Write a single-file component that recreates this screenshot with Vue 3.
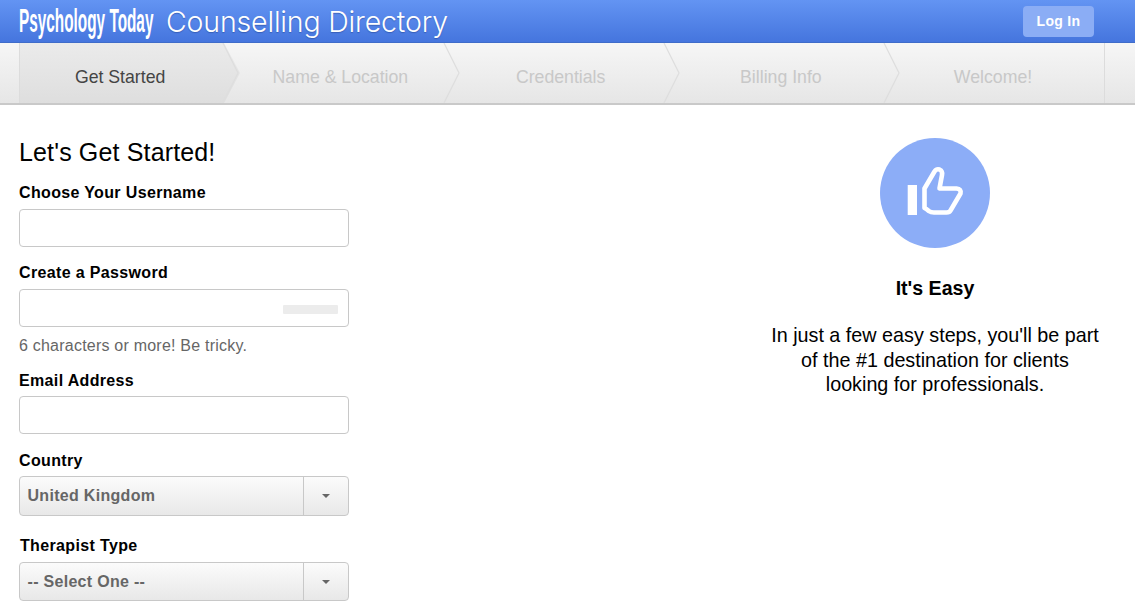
<script setup>
const steps = [
  { name: 'Get Started', active: true },
  { name: 'Name & Location' },
  { name: 'Credentials' },
  { name: 'Billing Info' },
  { name: 'Welcome!', last: true }
]
</script>

<template>
  <div class="page">
    <header class="topbar">
      <div class="brand">
        <span class="logo">Psychology Today</span>
        <span class="title">Counselling Directory</span>
      </div>
      <button class="login">Log In</button>
    </header>

    <nav class="stepsbar">
      <div class="steps">
        <div v-for="s in steps" :key="s.name" class="step" :class="{ active: s.active, last: s.last }">
          <svg v-if="s.active" class="active-bg" viewBox="0 0 221 60" preserveAspectRatio="none">
            <defs>
              <linearGradient id="activeGrad" x1="0" y1="0" x2="0" y2="1">
                <stop offset="0" stop-color="#ebebeb" />
                <stop offset="1" stop-color="#dedede" />
              </linearGradient>
            </defs>
            <polygon points="0,0 204,0 220,30 204,60 0,60" fill="url(#activeGrad)" />
          </svg>
          <span class="step-name">{{ s.name }}</span>
          <svg v-if="!s.last" class="chev" viewBox="0 0 18 60" preserveAspectRatio="none">
            <polyline points="1,0 16,30 1,60" fill="none" stroke="#dedede" stroke-width="1.2" />
          </svg>
        </div>
      </div>
    </nav>

    <main class="content">
      <form class="form" @submit.prevent>
        <h1>Let's Get Started!</h1>
        <label class="lab first">Choose Your Username</label>
        <div class="input"></div>
        <label class="lab">Create a Password</label>
        <div class="input pw"><span class="meter"></span></div>
        <p class="hint">6 characters or more! Be tricky.</p>
        <label class="lab tight">Email Address</label>
        <div class="input"></div>
        <label class="lab tight">Country</label>
        <div class="select">
          <span class="value">United Kingdom</span>
          <span class="caret-box"><i class="caret"></i></span>
        </div>
        <label class="lab type">Therapist Type</label>
        <div class="select second">
          <span class="value">-- Select One --</span>
          <span class="caret-box"><i class="caret"></i></span>
        </div>
      </form>

      <aside class="side">
        <div class="circle">
          <svg width="110" height="110" viewBox="0 0 110 110">
            <rect x="27.7" y="47" width="9.3" height="30" fill="#fff" />
            <path d="M44.5 50.5 L54.5 33.5 Q56.5 30.5 59.5 31.5 Q62.8 33 62 37 L59.5 50.5 L76.5 50.5 Q81.5 51 80.5 55.5 L70.5 72.5 Q69.5 74.5 66.5 74.5 L54 74.5 Q51 74.5 48.5 72.8 Q46.5 71 44.5 70 Z"
              fill="none" stroke="#fff" stroke-width="4.6" stroke-linejoin="round" />
          </svg>
        </div>
        <h2>It's Easy</h2>
        <p>In just a few easy steps, you'll be part<br />of the #1 destination for clients<br />looking for professionals.</p>
      </aside>
    </main>
  </div>
</template>

<style>
html, body { margin: 0; background: #fff; }
</style>

<style scoped>
.page {
  width: 1135px;
  height: 609px;
  overflow: hidden;
  font-family: "Liberation Sans", Arial, sans-serif;
  color: #000;
  background: #fff;
}
.topbar {
  height: 43px;
  box-sizing: border-box;
  display: flex;
  align-items: center;
  justify-content: space-between;
  padding: 0 41px 0 19px;
  background: linear-gradient(#6394f3, #4575de);
  border-bottom: 1px solid #3f6cc9;
}
.brand { display: flex; align-items: center; }
.logo {
  display: inline-block;
  width: 136px;
  white-space: nowrap;
  font-family: "Liberation Sans", Arial, sans-serif;
  font-weight: 700;
  font-size: 33px;
  line-height: 36px;
  color: #fff;
  transform: scaleX(0.465);
  transform-origin: left center;
}
.title {
  margin-left: 11px;
  padding-top: 2px;
  font-family: Inter, Lato, "Liberation Sans", sans-serif;
  font-weight: 300;
  font-size: 28.5px;
  line-height: 34px;
  letter-spacing: -0.17px;
  color: #fff;
  text-shadow: 0 1px 1px rgba(30, 60, 130, 0.45);
}
.login {
  width: 71px;
  height: 31px;
  margin-top: 1px;
  border: 0;
  border-radius: 4px;
  background: #8badf5;
  color: #fff;
  font: bold 14px "Liberation Sans", Arial, sans-serif;
  letter-spacing: 0.3px;
  padding: 0 0 2px;
}
.stepsbar {
  height: 62px;
  box-sizing: border-box;
  padding-left: 19px;
  background: linear-gradient(#f6f6f6, #e6e6e6);
  border-bottom: 2px solid #c9c9c9;
}
.steps {
  width: 1086px;
  height: 100%;
  display: flex;
  border-left: 1px solid #dcdcdc;
  border-right: 1px solid #dcdcdc;
  box-sizing: border-box;
}
.step {
  position: relative;
  width: 220.25px;
  flex: none;
  display: flex;
  align-items: center;
  justify-content: center;
  padding: 9px 20px 0 0;
  box-sizing: border-box;
  font-size: 17.7px;
  color: #c8c8c8;
}
.step.last { width: 200px; padding: 9px 16px 0 0; }
.step.active { color: #444; }
.step-name { position: relative; }
.active-bg {
  position: absolute;
  left: 0;
  top: 0;
  width: 221px;
  height: 100%;
}
.chev {
  position: absolute;
  right: 0;
  top: 0;
  width: 18px;
  height: 100%;
}
.content {
  display: flex;
  justify-content: space-between;
}
.form {
  width: 330px;
  margin-left: 19px;
  padding-top: 33px;
}
h1 {
  margin: 0;
  font-size: 25px;
  letter-spacing: 0.15px;
  font-weight: 400;
  line-height: 28px;
}
.lab {
  display: block;
  font-size: 16px;
  letter-spacing: 0.35px;
  font-weight: 700;
  line-height: 18px;
  margin-top: 17px;
  margin-bottom: 7px;
}
.lab.first { margin-top: 18px; }
.lab.tight { margin-top: 18px; margin-bottom: 6px; }
.lab.type { margin: 21px 0 7px 1px; }
.input {
  height: 38px;
  box-sizing: border-box;
  border: 1px solid #c8c8c8;
  border-radius: 4px;
  background: #fff;
  position: relative;
}
.meter {
  position: absolute;
  right: 10px;
  top: 15px;
  width: 55px;
  height: 9px;
  border-radius: 1px;
  background: #ececec;
}
.hint {
  margin: 10px 0 -1px;
  font-size: 16px;
  letter-spacing: 0.22px;
  line-height: 18px;
  color: #666;
}
.select {
  height: 40px;
  box-sizing: border-box;
  display: flex;
  border: 1px solid #c8c8c8;
  border-radius: 4px;
  background: linear-gradient(#fbfbfb, #e8e8e8);
}
.select.second { height: 39px; }
.value {
  flex: 1;
  display: flex;
  align-items: center;
  padding-left: 7.5px;
  font-size: 16px;
  letter-spacing: 0.3px;
  font-weight: 700;
  color: #666;
}
.caret-box {
  width: 44px;
  display: flex;
  align-items: center;
  justify-content: center;
  border-left: 1px solid #c8c8c8;
}
.caret {
  width: 0;
  height: 0;
  border-left: 4.5px solid transparent;
  border-right: 4.5px solid transparent;
  border-top: 4.5px solid #666;
}
.side {
  width: 340px;
  margin-right: 30px;
  padding-top: 33px;
  text-align: center;
}
.circle {
  width: 110px;
  height: 110px;
  margin: 0 auto;
  border-radius: 50%;
  background: #8cadf7;
}
.circle svg { display: block; }
h2 {
  margin: 28px 0 0;
  font-size: 19.6px;
  line-height: 24px;
  font-weight: 700;
}
.side p {
  margin: 23px 0 0;
  font-size: 19.75px;
  line-height: 24.5px;
}
</style>
